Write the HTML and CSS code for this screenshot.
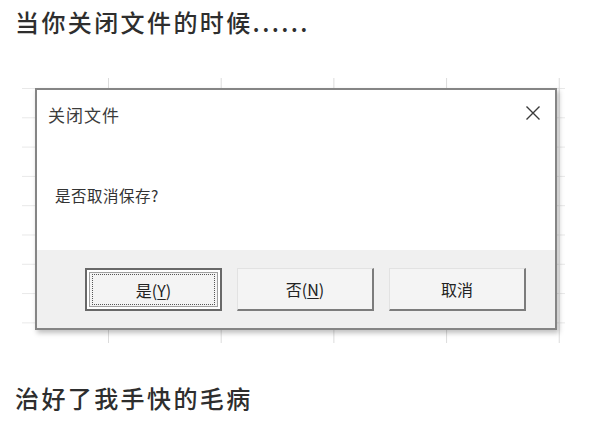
FILE: index.html
```html
<!DOCTYPE html>
<html lang="zh-CN">
<head>
<meta charset="utf-8">
<title>关闭文件</title>
<link rel="stylesheet" href="styles.css">
</head>
<body>
<div class="caption">当你关闭文件的时候......</div>
<div class="stage">
  <div class="dialog">
    <div class="dialog-head">
      <span class="dialog-title">关闭文件</span>
      <svg class="close" width="16" height="16" viewBox="0 0 16 16">
        <path d="M1.5 1.5 L14.5 14.5 M14.5 1.5 L1.5 14.5" stroke="#3a3a3a" stroke-width="1.4" fill="none"/>
      </svg>
    </div>
    <div class="dialog-msg">是否取消保存?</div>
    <div class="dialog-foot">
      <button class="btn btn-default"><span class="focus">是(<u>Y</u>)</span></button>
      <button class="btn">否(<u>N</u>)</button>
      <button class="btn">取消</button>
    </div>
  </div>
</div>
<div class="caption caption-bottom">治好了我手快的毛病</div>
</body>
</html>
```

FILE: styles.css
```css
html, body {
  margin: 0;
  padding: 0;
  background: #ffffff;
}
body {
  width: 600px;
  height: 425px;
  overflow: hidden;
  font-family: "Noto Sans CJK SC", "Noto Sans", sans-serif;
}
.caption {
  font-size: 24px;
  line-height: 30px;
  letter-spacing: 2.4px;
  color: #2e2e2e;
  font-weight: 500;
  padding: 7px 0 0 15px;
}
.caption-bottom {
  padding-top: 0;
  margin-top: 40px;
}
.stage {
  margin: 41px 0 0 22px;
  width: 543px;
  height: 265px;
  padding: 10px 0 0 13px;
  box-sizing: border-box;
  background-image:
    linear-gradient(to right, #dcdcdc 1px, transparent 1px),
    linear-gradient(to bottom, #e8e8e8 1px, transparent 1px);
  background-size: 112.7px 100%, 100% 29.3px;
  background-position: 86px 0, 0 10px;
}
.dialog {
  width: 522px;
  height: 242px;
  box-sizing: border-box;
  border: 2px solid #858585;
  background: #ffffff;
  box-shadow: 2px 3px 5px rgba(0, 0, 0, 0.25);
  display: flex;
  flex-direction: column;
}
.dialog-head {
  display: flex;
  justify-content: space-between;
  align-items: center;
  padding: 14px 14px 0 11px;
  height: 22px;
}
.dialog-title {
  font-size: 17px;
  line-height: 22px;
  color: #3c3c3c;
  letter-spacing: 1px;
}
.close {
  display: block;
  margin-top: -4px;
}
.dialog-msg {
  margin-top: 59px;
  padding-left: 18px;
  font-size: 15.5px;
  line-height: 20px;
  color: #333333;
  letter-spacing: 0.5px;
}
.dialog-foot {
  margin-top: auto;
  height: 78px;
  box-sizing: border-box;
  background: #f0f0f0;
  display: flex;
  gap: 15px;
  padding: 18px 0 0 48px;
}
.btn {
  width: 137px;
  height: 43px;
  box-sizing: border-box;
  background: #f4f4f4;
  border-style: solid;
  border-width: 1px 2px 2px 1px;
  border-color: #e2e2e2 #7c7c7c #7c7c7c #e2e2e2;
  font-family: "Noto Sans CJK SC", "Noto Sans", sans-serif;
  font-size: 16px;
  color: #222222;
  padding: 0;
  display: flex;
  align-items: center;
  justify-content: center;
}
.btn u {
  text-decoration-thickness: 1px;
  text-underline-offset: 2px;
}
.btn-default {
  border: 2px solid #686868;
  box-shadow: inset 0 0 0 2px #ffffff, inset 0 0 0 3px #a0a0a0;
  padding: 4px 5px;
}
.focus {
  flex: 1;
  align-self: stretch;
  display: flex;
  align-items: center;
  justify-content: center;
  border: 1px dotted #555555;
}
```
